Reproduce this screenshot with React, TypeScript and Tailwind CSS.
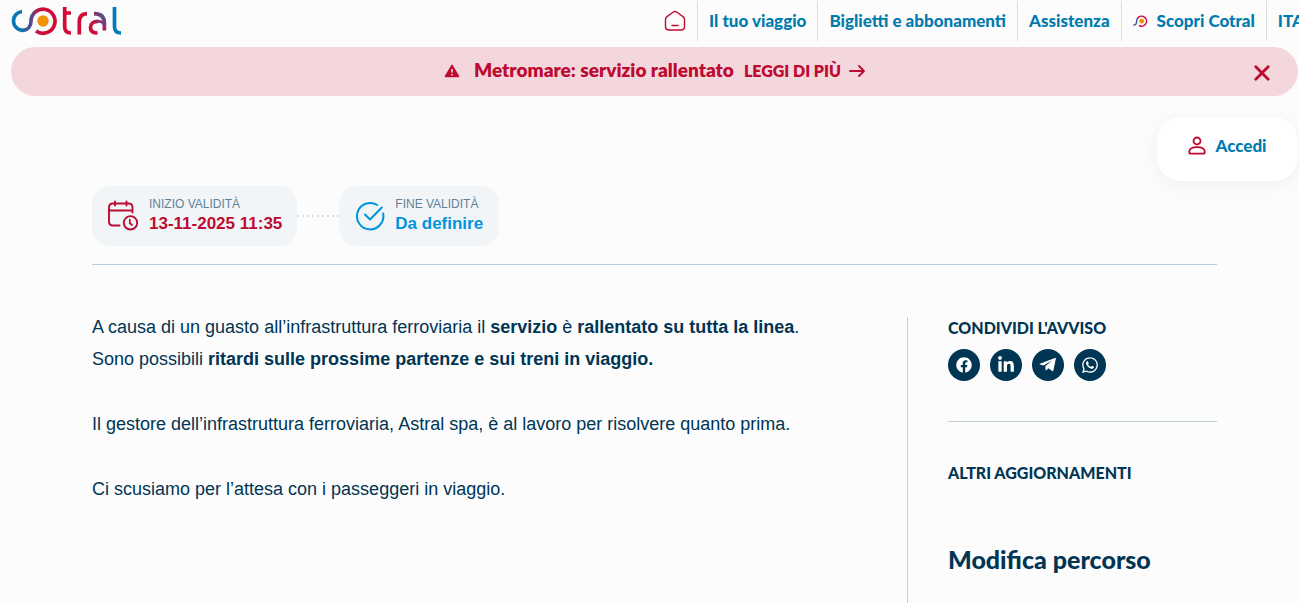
import React from 'react';
import { FaFacebook, FaLinkedinIn, FaWhatsapp } from 'react-icons/fa';

function CotralLogo() {
  return (
    <svg width="112" height="30" viewBox="10 6 112 30" fill="none" strokeWidth="3.7" role="img" aria-label="Cotral">
      <defs>
        <linearGradient id="swirl" gradientUnits="userSpaceOnUse" x1="11" y1="0" x2="56" y2="0">
          <stop offset="0" stopColor="#007db8" />
          <stop offset="0.25" stopColor="#1c6fae" />
          <stop offset="0.45" stopColor="#5b4a8a" />
          <stop offset="0.62" stopColor="#c8103e" />
          <stop offset="1" stopColor="#d30a36" />
        </linearGradient>
        <linearGradient id="bowl" gradientUnits="userSpaceOnUse" x1="90" y1="34" x2="107" y2="18">
          <stop offset="0" stopColor="#d30a36" />
          <stop offset="0.5" stopColor="#c01846" />
          <stop offset="1" stopColor="#4a5594" />
        </linearGradient>
      </defs>
      <path d="M22 11.5A9.5 9.5 0 0 0 22 30.4C28 30.4 31 26 31 21A12 12 0 1 1 36 31" stroke="url(#swirl)" />
      <circle cx="43" cy="21" r="5.7" fill="#f39200" />
      <path d="M64.7 7V27Q64.7 33 71 33M64.7 13H71" stroke="#d30a36" />
      <path d="M79.3 34.5V22Q79.3 13.6 87 13.6" stroke="#d30a36" />
      <path d="M94 13.6C101 13.600 104.400 17 104.400 23V30.500M97.500 33C92.500 33 90.500 30.500 90.500 27.500C90.500 23.500 93.500 21.300 98 21.300" stroke="url(#bowl)" />
      <path d="M98 21.300C101.500 21.300 104 22.500 104.400 26" stroke="#7a3f78" strokeWidth="3" />
      <path d="M114.5 7V27Q114.5 33 121 33" stroke="#007db8" />
    </svg>
  );
}

function SwirlIcon() {
  return (
    <svg width="16" height="14" viewBox="0 0 16 14" fill="none" aria-hidden="true">
      <path d="M.3 11.200C3 11.200 3.600 9.500 3.600 7.500C3.600 5.500 4.200 4.200 5.400 3.200" stroke="#3f5a9a" strokeWidth="1.400" />
      <path d="M4.600 4.100A5 5 0 1 1 6 11.500" stroke="#d30a36" strokeWidth="1.500" />
      <circle cx="8.700" cy="7.200" r="2.400" fill="#f39200" />
    </svg>
  );
}

function HomeIcon() {
  return (
    <svg width="22" height="22" viewBox="0 0 22 22" fill="none" stroke="#be0a30" strokeWidth="1.4" strokeLinecap="round" strokeLinejoin="round" aria-hidden="true">
      <path d="M9.400 2 3 6.600Q1.500 7.700 1.500 9.400V16.500Q1.500 20 5 20H17Q20.500 20 20.500 16.500V9.400Q20.500 7.700 19 6.600L12.600 2Q11 1 9.400 2ZM8 15.500H14" />
    </svg>
  );
}

function UserIcon() {
  return (
    <svg width="18" height="20" viewBox="0 0 18 20" fill="none" stroke="#be0a30" strokeWidth="1.800" aria-hidden="true">
      <circle cx="9" cy="5" r="3.500" />
      <path d="M9 11.200C13.500 11.200 16.800 13 16.800 16Q16.800 17.700 15 17.700H3Q1.200 17.700 1.200 16C1.200 13 4.500 11.200 9 11.200Z" />
    </svg>
  );
}

function CalendarIcon() {
  return (
    <svg width="32" height="32" viewBox="0 0 32 32" fill="none" stroke="#be0a30" strokeWidth="1.9" strokeLinecap="round" aria-hidden="true">
      <path d="M12.500 25.500H6Q2 25.500 2 21.500V7.500Q2 3.500 6 3.500H21.500Q25.500 3.500 25.500 7.500V12.500M2 10.500H25.500M8 1.500V5.500M19.500 1.500V5.500" />
      <circle cx="23.500" cy="22.800" r="6.700" />
      <path d="M22.800 19.500V23L25 25" strokeWidth="1.700" />
    </svg>
  );
}

function CheckIcon() {
  return (
    <svg width="30" height="30" viewBox="0 0 30 30" fill="none" stroke="#0095db" strokeWidth="2" strokeLinecap="round" strokeLinejoin="round" aria-hidden="true">
      <path d="M22.200 4A13.200 13.200 0 1 0 28.100 12.500M10 13.500 15 18.500 26.800 6.500" />
    </svg>
  );
}

function TelegramIcon() {
  return (
    <svg width="18" height="16" viewBox="0 0 18 16" fill="#fff" aria-hidden="true">
      <path d="M.8 6.700 16 .9Q17 .5 16.800 1.700L14.400 13.500Q14.200 14.600 13.200 14L9.400 11.200 7.300 13.200Q6.600 13.700 6.500 12.700L6.300 9.300 13 3.500 4.600 8.600 1 7.500Q.1 7.100.8 6.700Z" />
    </svg>
  );
}

const navItems = ['Il tuo viaggio', 'Biglietti e abbonamenti', 'Assistenza'];

const shares = [
  { name: 'Facebook', icon: <FaFacebook size={16} /> },
  { name: 'LinkedIn', icon: <FaLinkedinIn size={18} /> },
  { name: 'Telegram', icon: <TelegramIcon /> },
  { name: 'WhatsApp', icon: <FaWhatsapp size={18} /> },
];

function Header() {
  return (
    <header className="flex h-[47px] items-start justify-between overflow-hidden pl-[10px]">
      <a href="#" className="shrink-0 pt-[6px]">
        <CotralLogo />
      </a>
      <nav className="-mr-4 flex h-10 shrink-0 items-center divide-x divide-[#dcdcdc] pt-px text-[17px] font-black whitespace-nowrap text-[#007bb0]">
        <a href="#" aria-label="Home" className="flex h-10 items-center px-[11px]">
          <HomeIcon />
        </a>
        {navItems.map((item) => (
          <a key={item} href="#" className="flex h-10 items-center px-[11px]">
            {item}
          </a>
        ))}
        <a href="#" className="flex h-10 items-center gap-2 px-[11px]">
          <SwirlIcon />
          Scopri Cotral
        </a>
        <a href="#" className="flex h-10 items-center px-[11px]">
          ITA
        </a>
      </nav>
    </header>
  );
}

function AlertBar() {
  return (
    <div className="mr-px ml-[11px] flex h-[49px] items-center rounded-full bg-[#f3d7dc] pr-7 pl-11 text-[#be0a30]">
      <div className="flex flex-1 items-center justify-center pb-0.5 text-[19px] font-extrabold">
        <svg width="16" height="14" viewBox="0 0 16 14" className="mr-[14px]" aria-hidden="true">
          <path d="M7.200 1.200Q8 0 8.800 1.200L15.200 12Q15.700 13.200 14.500 13.200H1.500Q.3 13.200.8 12Z" fill="#be0a30" />
          <path d="M8 5V8.600M8 10V11.500" stroke="#f3d7dc" strokeWidth="1.600" />
        </svg>
        <span>Metromare: servizio rallentato</span>
        <a href="#" className="ml-[10px] flex items-center gap-2 text-base">
          LEGGI DI PIÙ
          <svg width="16" height="12" viewBox="0 0 16 12" fill="none" stroke="#be0a30" strokeWidth="1.800" strokeLinecap="round" strokeLinejoin="round" aria-hidden="true">
            <path d="M1 6H15M10 1 15 6 10 11" />
          </svg>
        </a>
      </div>
      <button type="button" aria-label="Chiudi" className="pt-[3px]">
        <svg width="16" height="16" viewBox="0 0 16 16" stroke="#be0a30" strokeWidth="2.800" strokeLinecap="round" aria-hidden="true">
          <path d="M1.800 1.800 14.200 14.200M14.200 1.800 1.800 14.200" />
        </svg>
      </button>
    </div>
  );
}

export default function App() {
  return (
    <div className="flex min-h-screen flex-col overflow-hidden bg-[#fcfcfc] font-[Lato,sans-serif] text-[#003554]">
      <Header />
      <AlertBar />
      <div className="mt-[21px] flex justify-end pr-px">
        <button type="button" className="flex h-16 w-[141px] items-center justify-center gap-[9px] rounded-3xl bg-white pb-[6px] text-[17px] font-black text-[#007bb0] shadow-[0_4px_20px_rgba(0,0,0,0.05)]">
          <UserIcon />
          Accedi
        </button>
      </div>
      <main className="mt-[5px] mr-[82px] ml-[92px] flex flex-1 flex-col">
        <div className="flex items-center border-b border-[#b3cde0] pb-[18px] font-['Liberation_Sans',sans-serif]">
          <div className="flex h-[60px] items-center gap-[10px] rounded-[18px] bg-[#f1f5f8] px-[15px]">
            <CalendarIcon />
            <div>
              <p className="text-xs leading-4 text-[#5f8299]">INIZIO VALIDITÀ</p>
              <p className="text-[17px] leading-6 font-bold text-[#be0a30]">13-11-2025 11:35</p>
            </div>
          </div>
          <div className="h-0.5 w-[42px] bg-[repeating-linear-gradient(90deg,#c5e6f2_0_2px,transparent_2px_5px)]" />
          <div className="flex h-[60px] items-center gap-[10px] rounded-[18px] bg-[#f1f5f8] px-4">
            <CheckIcon />
            <div>
              <p className="text-xs leading-4 text-[#5f8299]">FINE VALIDITÀ</p>
              <p className="text-[17px] leading-6 font-bold text-[#0095db]">Da definire</p>
            </div>
          </div>
        </div>
        <div className="flex flex-1 pt-[46px]">
          <article className="flex flex-1 flex-col gap-[33px] font-['Liberation_Sans',sans-serif] text-lg leading-8">
            <p>
              A causa di un guasto all’infrastruttura ferroviaria il <strong>servizio</strong> è <strong>rallentato su tutta la linea</strong>.
              <br />
              Sono possibili <strong>ritardi sulle prossime partenze e sui treni in viaggio.</strong>
            </p>
            <p>Il gestore dell’infrastruttura ferroviaria, Astral spa, è al lavoro per risolvere quanto prima.</p>
            <p>Ci scusiamo per l’attesa con i passeggeri in viaggio.</p>
          </article>
          <aside className="mt-[6px] w-[310px] border-l border-[#bfcfd9] pl-10">
            <h2 className="text-base leading-[22px] font-black">CONDIVIDI L'AVVISO</h2>
            <ul className="mt-[10px] flex gap-[10px] border-b border-[#bfcfd9] pb-10">
              {shares.map(({ name, icon }) => (
                <li key={name}>
                  <a href="#" aria-label={name} className="flex size-8 items-center justify-center rounded-full bg-[#003554] text-white">
                    {icon}
                  </a>
                </li>
              ))}
            </ul>
            <h2 className="mt-10 text-base leading-[22px] font-black">ALTRI AGGIORNAMENTI</h2>
            <h3 className="mt-[59px] text-[25px] leading-8 font-black">Modifica percorso</h3>
          </aside>
        </div>
      </main>
    </div>
  );
}
